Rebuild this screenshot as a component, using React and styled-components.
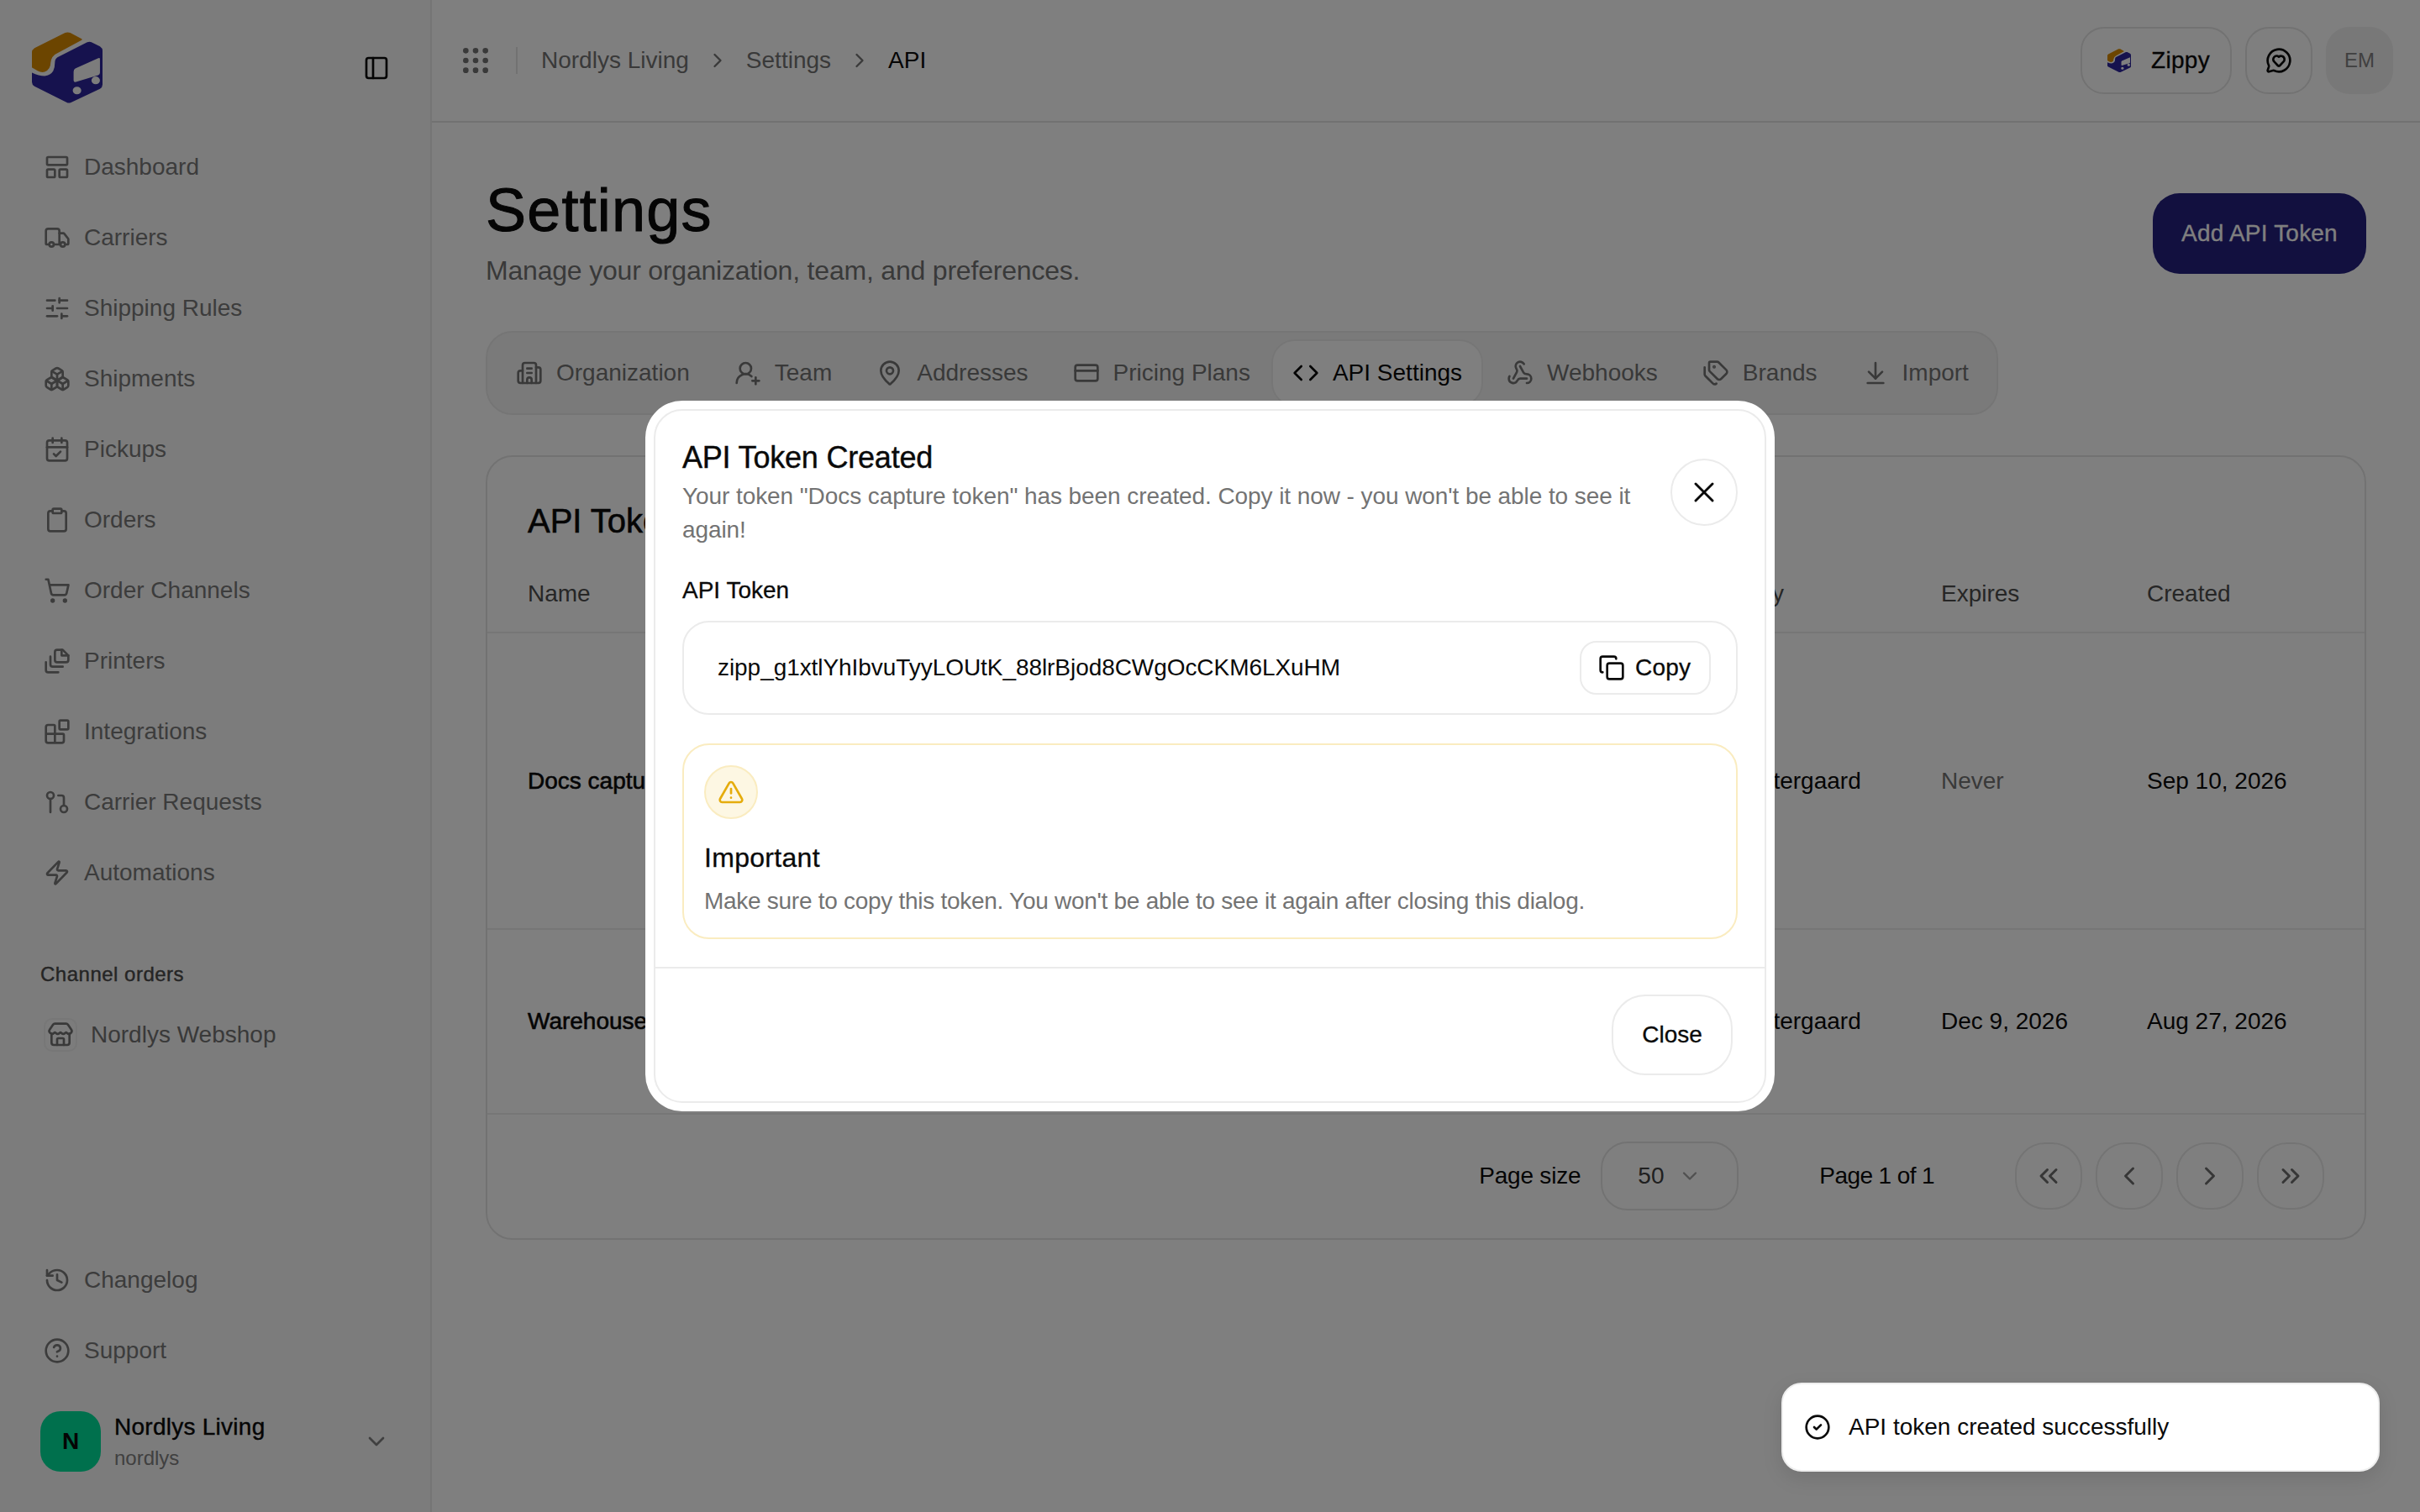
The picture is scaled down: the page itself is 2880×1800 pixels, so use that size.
import React from 'react'
import styled, { createGlobalStyle } from 'styled-components'
import {
  Truck, SlidersHorizontal, Boxes, CalendarCheck, Clipboard, ShoppingCart, Blocks, GitPullRequest, Zap,
  Store, History, CircleHelp, ChevronDown, ChevronRight, ChevronLeft, ChevronsLeft, ChevronsRight, PanelLeft, Grip,
  MessageCircleHeart, Building2, UserRoundPlus, MapPin, CreditCard, Code, Webhook, Tags, ArrowDownToLine, X, Copy,
  TriangleAlert, CircleCheck, LayoutPanelTop,
} from 'lucide-react'

const GlobalStyle = createGlobalStyle`
  html, body { margin: 0; padding: 0; background: #fff; }
  body { font-family: "Liberation Sans", Arial, sans-serif; color: #0a0a0a; overflow: hidden; }
  * { box-sizing: border-box; }
`

const Frame = styled.div`
  zoom: 2;
  position: relative;
  width: 1440px;
  height: 900px;
  display: flex;
  overflow: hidden;
  background: #fff;
`

const Sidebar = styled.aside`
  width: 257px;
  flex: none;
  display: flex;
  flex-direction: column;
  background: #f8f8f8;
  border-right: 1px solid #eaeaea;
  padding-bottom: 24px;
`
const SideHead = styled.div`
  height: 78.5px;
  flex: none;
  display: flex;
  align-items: center;
  justify-content: space-between;
  padding: 2px 24px 0 19px;
  color: #0a0a0a;
`
const NavItem = styled.div`
  height: 42px;
  flex: none;
  display: flex;
  align-items: center;
  gap: 8px;
  padding-left: 26px;
  font-size: 14px;
  color: #787878;
`
const GroupLabel = styled.div`
  margin: 29.5px 0 0 24px;
  height: 20px;
  line-height: 20px;
  font-size: 12px;
  letter-spacing: 0.25px;
  color: #4a4a4a;
  -webkit-text-stroke: 0.2px currentColor;
`
const ShopItem = styled.div`
  margin-top: 11px;
  height: 30px;
  display: flex;
  align-items: center;
  gap: 8px;
  padding-left: 26px;
  font-size: 14px;
  color: #737373;
`
const ShopIcon = styled.span`
  width: 20px;
  height: 20px;
  display: flex;
  align-items: center;
  justify-content: center;
  border: 1px solid #efefef;
  border-radius: 5px;
`
const SideBottom = styled.div`
  margin-top: auto;
`
const Account = styled.div`
  margin-top: 15px;
  height: 36px;
  display: flex;
  align-items: center;
  padding: 0 24px;
  gap: 8px;
`
const AccountAvatar = styled.div`
  width: 36px;
  height: 36px;
  border-radius: 12px;
  background: #00e09a;
  display: flex;
  align-items: center;
  justify-content: center;
  font-size: 14px;
  font-weight: 700;
  color: #0a0a0a;
`
const AccountText = styled.div`
  flex: 1;
  display: flex;
  flex-direction: column;
  margin-top: -1px;
`
const AccountName = styled.div`
  font-size: 14px;
  line-height: 20px;
  letter-spacing: 0.13px;
  color: #0a0a0a;
  -webkit-text-stroke: 0.2px currentColor;
`
const AccountSlug = styled.div`
  margin-top: 0.5px;
  font-size: 12px;
  line-height: 16px;
  color: #808080;
`
const AccountChevron = styled(ChevronDown)`
  color: #808080;
`

const Main = styled.main`
  flex: 1;
  min-width: 0;
  display: flex;
  flex-direction: column;
`
const TopBar = styled.header`
  height: 73px;
  flex: none;
  display: flex;
  align-items: center;
  padding: 0 16px;
  border-bottom: 1px solid #e5e5e5;
`
const GripIcon = styled(Grip)`
  color: #737373;
`
const TopDivider = styled.span`
  width: 1px;
  height: 16px;
  background: #e5e5e5;
  margin: 0 14px;
`
const Crumbs = styled.nav`
  display: flex;
  align-items: center;
  gap: 10px;
  font-size: 14px;
  color: #737373;
  flex: 1;
`
const Crumb = styled.span`
  color: ${p => (p.$current ? '#0a0a0a' : '#737373')};
`
const TopActions = styled.div`
  display: flex;
  align-items: center;
  gap: 8px;
`
const OutlineBtn = styled.button`
  height: 40px;
  width: ${p => p.$w || 40}px;
  display: flex;
  align-items: center;
  justify-content: ${p => (p.$w ? 'flex-start' : 'center')};
  gap: 12px;
  padding: ${p => (p.$w ? '0 0 0 15px' : '0')};
  border: 1px solid #e5e5e5;
  border-radius: 14px;
  background: transparent;
  font: inherit;
  font-size: 14px;
  letter-spacing: 0.15px;
  color: #0a0a0a;
  -webkit-text-stroke: 0.15px currentColor;
`
const UserChip = styled.div`
  width: 40px;
  height: 40px;
  border-radius: 14px;
  background: #f0f0f0;
  color: #808080;
  font-size: 12px;
  display: flex;
  align-items: center;
  justify-content: center;
`

const Content = styled.div`
  padding: 32px 32px 0;
`
const TitleRow = styled.div`
  display: flex;
  align-items: center;
  justify-content: space-between;
`
const PageTitle = styled.h1`
  margin: 0;
  font-size: 36px;
  line-height: 40px;
  font-weight: 400;
  letter-spacing: 0.6px;
  -webkit-text-stroke: 0.5px currentColor;
`
const PageSub = styled.p`
  margin: 4px 0 0;
  font-size: 16px;
  line-height: 24px;
  letter-spacing: -0.1px;
  color: #737373;
`
const PrimaryBtn = styled.button`
  width: 127px;
  height: 48px;
  border: 0;
  border-radius: 16px;
  background: #24207f;
  color: #fff;
  font: inherit;
  font-size: 14px;
  letter-spacing: 0.1px;
  -webkit-text-stroke: 0.15px currentColor;
`
const TabBar = styled.div`
  margin-top: 24px;
  width: 900px;
  height: 50px;
  display: flex;
  gap: 2px;
  padding: 4px 4px 4px 4.75px;
  background: #f5f5f5;
  border: 1px solid #ebebeb;
  border-radius: 16px;
`
const Tab = styled.div`
  height: 40px;
  display: flex;
  align-items: center;
  gap: 8px;
  padding: 0 11.25px;
  font-size: 14px;
  white-space: nowrap;
  border-radius: 14px;
  border: 1px solid ${p => (p.$active ? '#ededed' : 'transparent')};
  background: ${p => (p.$active ? '#fff' : 'transparent')};
  color: ${p => (p.$active ? '#0a0a0a' : '#737373')};
  margin-left: ${p => (p.$active ? -1.5 : 0)}px;
`
const Card = styled.section`
  margin-top: 24px;
  height: 467px;
  border: 1px solid #e5e5e5;
  border-radius: 16px;
`
const CardTitle = styled.h2`
  margin: 0;
  padding: 24px 24px 0;
  font-size: 20px;
  line-height: 28px;
  font-weight: 400;
  -webkit-text-stroke: 0.3px currentColor;
`
const TableRow = styled.div`
  display: grid;
  grid-template-columns: 679px 162px 122.5px 1fr;
  align-items: center;
  padding-left: 24px;
  font-size: 14px;
  height: ${p => p.$h}px;
  margin-top: ${p => p.$mt || 0}px;
  border-bottom: 1px solid #ededed;
`
const HeadCell = styled.div`
  color: #4d4d4d;
`
const NameCell = styled.div`
  -webkit-text-stroke: 0.3px currentColor;
`
const MutedCell = styled.div`
  color: #737373;
`
const Pager = styled.div`
  height: 73px;
  display: flex;
  align-items: center;
  justify-content: flex-end;
  padding-right: 24px;
  font-size: 14px;
`
const PagerText = styled.span`
  margin-right: ${p => p.$mr}px;
  letter-spacing: ${p => p.$ls}px;
`
const SizeSelect = styled.div`
  width: 82px;
  height: 41px;
  margin-right: 48px;
  display: flex;
  align-items: center;
  justify-content: space-between;
  padding: 0 21px 0 21px;
  border: 1px solid #e5e5e5;
  border-radius: 16px;
  color: #404040;
`
const PagerBtn = styled.button`
  width: 40px;
  height: 40px;
  margin-left: ${p => p.$ml || 0}px;
  display: flex;
  align-items: center;
  justify-content: center;
  padding: 0;
  border: 1px solid #e8e8e8;
  border-radius: 18px;
  background: transparent;
  color: #6e6e6e;
`

const Overlay = styled.div`
  position: absolute;
  inset: 0;
  display: flex;
  align-items: center;
  justify-content: center;
  background: rgba(0, 0, 0, 0.5);
`
const Modal = styled.div`
  width: 672px;
  padding: 5px;
  background: #fff;
  border-radius: 22px;
`
const ModalInner = styled.div`
  border: 1px solid #ebebeb;
  border-radius: 17px;
`
const ModalBody = styled.div`
  padding: 16px 16px 16.5px;
  border-bottom: 1px solid #ebebeb;
`
const ModalHead = styled.div`
  display: flex;
  align-items: center;
  gap: 16px;
`
const ModalTitle = styled.h3`
  margin: 0;
  font-size: 18px;
  line-height: 24px;
  font-weight: 400;
  letter-spacing: -0.1px;
  -webkit-text-stroke: 0.2px currentColor;
`
const ModalDesc = styled.p`
  margin: 1px 0 0;
  font-size: 14px;
  line-height: 20px;
  letter-spacing: -0.04px;
  color: #737373;
`
const CloseCircle = styled.button`
  width: 40px;
  height: 40px;
  flex: none;
  display: flex;
  align-items: center;
  justify-content: center;
  padding: 0;
  border: 1px solid #ebebeb;
  border-radius: 20px;
  background: #fff;
  color: #0a0a0a;
`
const FieldLabel = styled.div`
  margin-top: 16px;
  font-size: 14px;
  line-height: 20px;
  -webkit-text-stroke: 0.15px currentColor;
`
const TokenBox = styled.div`
  margin-top: 8px;
  height: 56px;
  display: flex;
  align-items: center;
  justify-content: space-between;
  padding: 0 15px 0 20px;
  border: 1px solid #ebebeb;
  border-radius: 16px;
  font-size: 14px;
  letter-spacing: -0.03px;
`
const CopyBtn = styled.button`
  height: 32px;
  width: 78px;
  display: flex;
  align-items: center;
  gap: 6px;
  padding: 0 0 0 10px;
  border: 1px solid #ebebeb;
  border-radius: 10px;
  background: #fff;
  font: inherit;
  font-size: 14px;
  letter-spacing: 0.1px;
  color: #0a0a0a;
  -webkit-text-stroke: 0.15px currentColor;
`
const WarnBox = styled.div`
  margin-top: 17px;
  height: 116.5px;
  padding: 12px;
  border: 1px solid #faecc0;
  border-radius: 16px;
  background: #fff;
`
const WarnBadge = styled.div`
  width: 32px;
  height: 32px;
  display: flex;
  align-items: center;
  justify-content: center;
  border: 1px solid #faecc0;
  border-radius: 16px;
  background: #fdf7e3;
  color: #e5ac0c;
`
const WarnTitle = styled.div`
  margin-top: 11px;
  font-size: 16px;
  line-height: 24px;
  letter-spacing: 0.15px;
  -webkit-text-stroke: 0.15px currentColor;
`
const WarnText = styled.div`
  margin-top: 4px;
  font-size: 14px;
  line-height: 20px;
  letter-spacing: -0.14px;
  color: #737373;
`
const ModalFoot = styled.div`
  display: flex;
  justify-content: flex-end;
  padding: 15.5px 19px 15.5px 0;
`
const CloseBtn = styled.button`
  width: 72px;
  height: 48px;
  border: 1px solid #ebebeb;
  border-radius: 20px;
  background: #fff;
  font: inherit;
  font-size: 14px;
  color: #0a0a0a;
  -webkit-text-stroke: 0.15px currentColor;
`
const Toast = styled.div`
  position: absolute;
  right: 24px;
  bottom: 24px;
  width: 356px;
  height: 53px;
  display: flex;
  align-items: center;
  gap: 10.5px;
  padding-left: 12.5px;
  background: #fff;
  border: 1px solid #eee;
  border-radius: 12px;
  box-shadow: 0 4px 12px rgba(0, 0, 0, 0.1);
  font-size: 14px;
`

const Logo = ({ size }) => (
  <svg width={size} height={size * 84 / 83} viewBox="18 18 83 84" aria-hidden="true">
    <path fill="#d88a00" d="M18 42q0-3 3-5L57 19q3-1 6 0l13 7q2 1 0 2L48 43q-7 3-8 11 0 8-7 11-4 1-8-1l-5-3q-3-1-3-4z" />
    <path fill="#2c249c" fillRule="evenodd" d="M18 66q8 4 15 4 7-1 10-6 2-4 2-10 0-4 3-6L83 30q3-1 5 0l10 5q3 2 3 5v40q0 3-3 5L64 101q-3 1-5 0L21 82q-3-2-3-5zM67 65v10q0 2 2 2l27-8q2-1 2-3V50q0-2-2-1L69 61q-2 1-2 4zM66 87a5 4.5 0 1 0 10 0 5 4.5 0 1 0-10 0zM88 75a5 4.5 0 1 0 10 0 5 4.5 0 1 0-10 0z" />
  </svg>
)

const PrinterPages = ({ size }) => (
  <svg width={size} height={size} viewBox="0 0 24 24" fill="none" stroke="currentColor" strokeWidth="2" strokeLinecap="round" strokeLinejoin="round" aria-hidden="true">
    <path d="M12 2h5l5 5v4a2 2 0 0 1-2 2h-8a2 2 0 0 1-2-2V4a2 2 0 0 1 2-2z" />
    <path d="M16 2v5h6" />
    <path d="M6 8v7a2 2 0 0 0 2 2h9" />
    <path d="M2 13v7a2 2 0 0 0 2 2h9" />
  </svg>
)

const navTop = [
  ['Dashboard', LayoutPanelTop],
  ['Carriers', Truck],
  ['Shipping Rules', SlidersHorizontal],
  ['Shipments', Boxes],
  ['Pickups', CalendarCheck],
  ['Orders', Clipboard],
  ['Order Channels', ShoppingCart],
  ['Printers', PrinterPages],
  ['Integrations', Blocks],
  ['Carrier Requests', GitPullRequest],
  ['Automations', Zap],
]
const tabs = [
  ['Organization', Building2],
  ['Team', UserRoundPlus],
  ['Addresses', MapPin],
  ['Pricing Plans', CreditCard],
  ['API Settings', Code, true],
  ['Webhooks', Webhook],
  ['Brands', Tags],
  ['Import', ArrowDownToLine],
]

export default function App() {
  return (
    <Frame>
      <GlobalStyle />
      <Sidebar>
        <SideHead>
          <Logo size={42} />
          <PanelLeft size={16} />
        </SideHead>
        {navTop.map(([label, Icon]) => (
          <NavItem key={label}><Icon size={16} />{label}</NavItem>
        ))}
        <GroupLabel>Channel orders</GroupLabel>
        <ShopItem><ShopIcon><Store size={16} /></ShopIcon>Nordlys Webshop</ShopItem>
        <SideBottom>
          <NavItem><History size={16} />Changelog</NavItem>
          <NavItem><CircleHelp size={16} />Support</NavItem>
          <Account>
            <AccountAvatar>N</AccountAvatar>
            <AccountText>
              <AccountName>Nordlys Living</AccountName>
              <AccountSlug>nordlys</AccountSlug>
            </AccountText>
            <AccountChevron size={16} />
          </Account>
        </SideBottom>
      </Sidebar>
      <Main>
        <TopBar>
          <GripIcon size={20} />
          <TopDivider />
          <Crumbs>
            <Crumb>Nordlys Living</Crumb>
            <ChevronRight size={14} />
            <Crumb>Settings</Crumb>
            <ChevronRight size={14} />
            <Crumb $current>API</Crumb>
          </Crumbs>
          <TopActions>
            <OutlineBtn $w={90}><Logo size={14} />Zippy</OutlineBtn>
            <OutlineBtn><MessageCircleHeart size={16} /></OutlineBtn>
            <UserChip>EM</UserChip>
          </TopActions>
        </TopBar>
        <Content>
          <TitleRow>
            <div>
              <PageTitle>Settings</PageTitle>
              <PageSub>Manage your organization, team, and preferences.</PageSub>
            </div>
            <PrimaryBtn>Add API Token</PrimaryBtn>
          </TitleRow>
          <TabBar>
            {tabs.map(([label, Icon, active]) => (
              <Tab key={label} $active={active}><Icon size={16} />{label}</Tab>
            ))}
          </TabBar>
          <Card>
            <CardTitle>API Tokens</CardTitle>
            <TableRow $h={46} $mt={7}>
              <HeadCell>Name</HeadCell>
              <HeadCell>Created by</HeadCell>
              <HeadCell>Expires</HeadCell>
              <HeadCell>Created</HeadCell>
            </TableRow>
            <TableRow $h={176.5}>
              <NameCell>Docs capture token</NameCell>
              <div>Emily Mortergaard</div>
              <MutedCell>Never</MutedCell>
              <div>Sep 10, 2026</div>
            </TableRow>
            <TableRow $h={110}>
              <NameCell>Warehouse sync</NameCell>
              <div>Emily Mortergaard</div>
              <div>Dec 9, 2026</div>
              <div>Aug 27, 2026</div>
            </TableRow>
            <Pager>
              <PagerText $mr={12} $ls={-0.1}>Page size</PagerText>
              <SizeSelect>50<ChevronDown size={14} color="#a3a3a3" /></SizeSelect>
              <PagerText $mr={48} $ls={-0.3}>Page 1 of 1</PagerText>
              <PagerBtn><ChevronsLeft size={18} /></PagerBtn>
              <PagerBtn $ml={8}><ChevronLeft size={18} /></PagerBtn>
              <PagerBtn $ml={8}><ChevronRight size={18} /></PagerBtn>
              <PagerBtn $ml={8}><ChevronsRight size={18} /></PagerBtn>
            </Pager>
          </Card>
        </Content>
      </Main>
      <Overlay>
        <Modal>
          <ModalInner>
            <ModalBody>
              <ModalHead>
                <div>
                  <ModalTitle>API Token Created</ModalTitle>
                  <ModalDesc>Your token "Docs capture token" has been created. Copy it now - you won't be able to see it again!</ModalDesc>
                </div>
                <CloseCircle><X size={20} strokeWidth={1.75} /></CloseCircle>
              </ModalHead>
              <FieldLabel>API Token</FieldLabel>
              <TokenBox>
                <span>zipp_g1xtlYhIbvuTyyLOUtK_88lrBjod8CWgOcCKM6LXuHM</span>
                <CopyBtn><Copy size={16} />Copy</CopyBtn>
              </TokenBox>
              <WarnBox>
                <WarnBadge><TriangleAlert size={16} /></WarnBadge>
                <WarnTitle>Important</WarnTitle>
                <WarnText>Make sure to copy this token. You won't be able to see it again after closing this dialog.</WarnText>
              </WarnBox>
            </ModalBody>
            <ModalFoot>
              <CloseBtn>Close</CloseBtn>
            </ModalFoot>
          </ModalInner>
        </Modal>
      </Overlay>
      <Toast><CircleCheck size={16} />API token created successfully</Toast>
    </Frame>
  )
}
